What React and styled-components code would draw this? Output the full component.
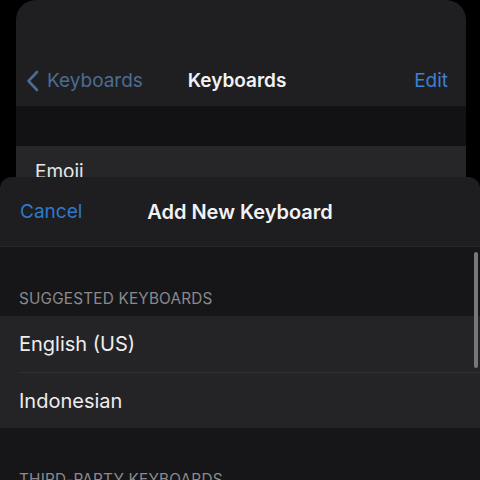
import styled, { createGlobalStyle } from 'styled-components'

const Global = createGlobalStyle`
  html, body {
    margin: 0;
    padding: 0;
    background: #000;
    width: 480px;
    height: 480px;
    overflow: hidden;
    font-family: Inter, "Noto Sans", "Liberation Sans", sans-serif;
  }
`;

const Screen = styled.div`
  position: relative;
  width: 480px;
  height: 480px;
  overflow: hidden;
  background: #000;
`;

const BackCard = styled.div`
  margin: 0 14px 0 16px;
  height: 200px;
  background: #1f1f21;
  border-radius: 20px 20px 0 0;
  overflow: hidden;
`;

const NavBar = styled.div`
  height: 106px;
  display: grid;
  grid-template-columns: 1fr auto 1fr;
  align-items: end;
  padding: 0 18px 14px 10px;
  box-sizing: border-box;
`;

const BackLink = styled.div`
  display: flex;
  align-items: center;
  gap: 8px;
  color: #4b6c93;
  font-size: 19px;
`;

const NavTitle = styled.div`
  color: #f2f2f4;
  font-size: ${p => p.size || 19}px;
  font-weight: 600;
`;

const NavAction = styled.div`
  justify-self: ${p => p.align || 'end'};
  color: ${p => p.color || '#3b80d4'};
  font-size: 19px;
`;

const Band = styled.div`
  height: 40px;
  background: #121214;
`;

const BackRow = styled.div`
  height: 60px;
  background: #262628;
  padding: 14px 19px;
  box-sizing: border-box;
  color: #e8e8ea;
  font-size: 19px;
`;

const Sheet = styled.div`
  position: absolute;
  left: 0;
  right: 0;
  top: 177px;
  bottom: 0;
  background: #161618;
  border-radius: 12px 12px 0 0;
  overflow: hidden;
`;

const SheetHeader = styled.div`
  height: 70px;
  background: #1e1e20;
  border-bottom: 1px solid #252527;
  display: grid;
  grid-template-columns: 1fr auto 1fr;
  align-items: center;
  padding: 0 20px;
  box-sizing: border-box;
`;

const SectionLabel = styled.div`
  padding: 42px 19px 8px;
  color: #8a8a8e;
  font-size: 15.3px;
  letter-spacing: 0.2px;
`;

const Group = styled.div`
  background: #242426;
`;

const Row = styled.div`
  height: 56px;
  margin-left: 19px;
  display: flex;
  align-items: center;
  color: #ededef;
  font-size: 20px;
  border-top: ${p => (p.$first ? 'none' : '1px solid #303032')};
  box-sizing: border-box;
`;

const ScrollBar = styled.div`
  position: absolute;
  right: 2px;
  top: 75px;
  width: 4px;
  height: 116px;
  border-radius: 2px;
  background: #77777a;
`;

function Chevron() {
  return (
    <svg width="13" height="22" viewBox="0 0 13 22" fill="none">
      <path d="M11 2 L2.5 11 L11 20" stroke="#4b6c93" strokeWidth="2.6" strokeLinecap="round" strokeLinejoin="round" />
    </svg>
  );
}

export default function App() {
  return (
    <Screen>
      <Global />
      <BackCard>
        <NavBar>
          <BackLink>
            <Chevron />
            Keyboards
          </BackLink>
          <NavTitle>Keyboards</NavTitle>
          <NavAction>Edit</NavAction>
        </NavBar>
        <Band />
        <BackRow>Emoji</BackRow>
      </BackCard>
      <Sheet>
        <SheetHeader>
          <NavAction align="start" color="#2f79cf">Cancel</NavAction>
          <NavTitle size={20}>Add New Keyboard</NavTitle>
          <div />
        </SheetHeader>
        <SectionLabel>SUGGESTED KEYBOARDS</SectionLabel>
        <Group>
          <Row $first>English (US)</Row>
          <Row>Indonesian</Row>
        </Group>
        <SectionLabel>THIRD-PARTY KEYBOARDS</SectionLabel>
        <ScrollBar />
      </Sheet>
    </Screen>
  );
}
